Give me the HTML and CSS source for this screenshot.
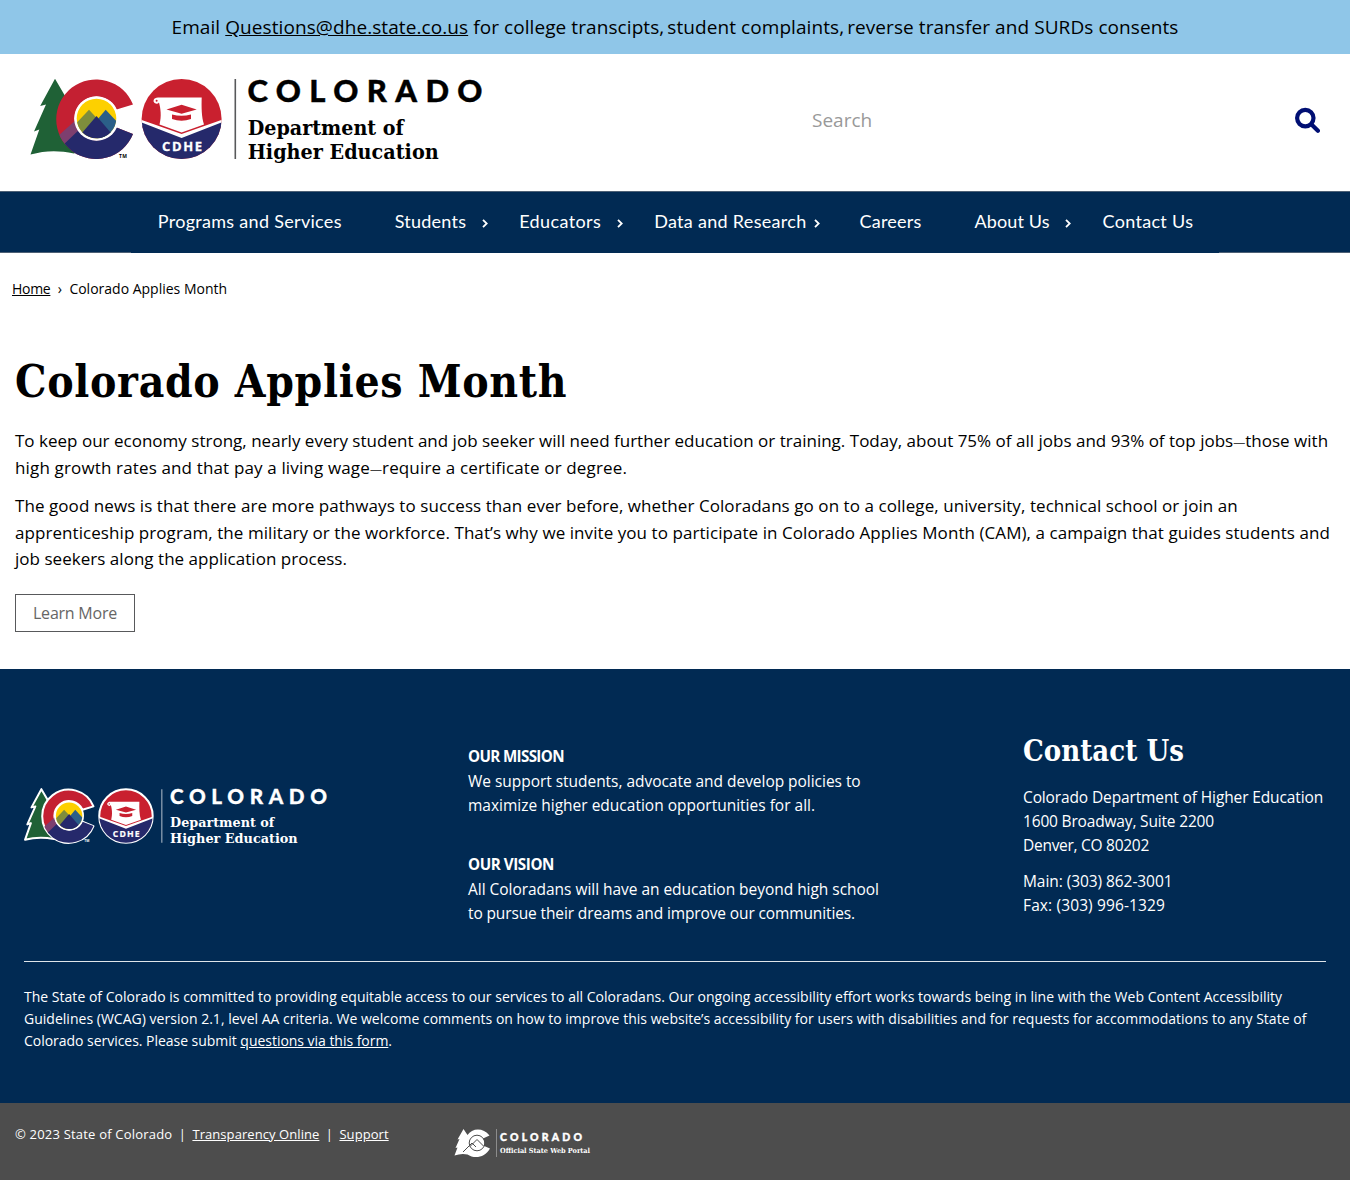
FILE: index.html
```html
<!DOCTYPE html>
<html lang="en">
<head>
<meta charset="utf-8">
<title>Colorado Applies Month</title>
<link rel="stylesheet" href="styles.css">
</head>
<body>
<svg class="sprite" aria-hidden="true">
  <defs>
    <clipPath id="c-clip"><path d="M113 39.500A39.800 39.800 0 1 0 113 69L96.500 62.500A22 22 0 1 1 96.500 44.500Z"/></clipPath>
    <clipPath id="sun-clip"><circle cx="76.500" cy="53.500" r="19.800"/></clipPath>
    <clipPath id="badge-clip"><circle cx="161.600" cy="54" r="40"/></clipPath>
    <symbol id="cdhe-logo" viewBox="0 0 470 110">
      <path class="edge" fill="#1f6136" d="M35 13.700 48 36 60 86 54 88.500C38 85 25 85.500 10.500 89.500L19.300 64.500 14 66.500 26 39.500 20.200 41Z"/>
      <path class="edge" fill="#c42032" d="M113 39.500A39.800 39.800 0 1 0 113 69L96.500 62.500A22 22 0 1 1 96.500 44.500Z"/>
      <g clip-path="url(#c-clip)">
        <path fill="#7d3f6f" d="M37 72 58 53 72 66 64 78 44 80Z"/>
        <path fill="#25296b" d="M40 83 62 62 80 60 96 58 116 62 116 100 50 100Z"/>
      </g>
      <circle cx="76.500" cy="53.500" r="22.300" fill="#fff"/>
      <g clip-path="url(#sun-clip)">
        <path fill="#fdd000" d="M50 30H100V80H50Z"/>
        <path fill="#7e8d3c" d="M50 65 69 44.700 86 63V80H50Z"/>
        <path fill="#2b5f88" d="M77 55 85.700 44.700 100 60V75H77Z"/>
        <path fill="#25296b" d="M50 82 76.500 51 103 82Z"/>
      </g>
      <text class="logo-sans logo-mark" x="99" y="92.500" font-size="5" textLength="8">TM</text>
      <circle class="edge" cx="161.600" cy="54" r="40" fill="#c9202f"/>
      <g clip-path="url(#badge-clip)">
        <path fill="#fff" d="M119 54 161.600 69 204 54V60L161.600 77 119 60Z"/>
        <path fill="#25296b" d="M119 56.500 161.600 73 204 56.500V100H119Z"/>
      </g>
      <path fill="#fff" d="M138 32.500H181.700C181.400 42 181.500 52 184 59.500L161.600 67.500 139.500 59.500C141.800 51 140.500 43 139 37.500Q137.500 39.500 135 38.300C132.300 36.500 133.500 32.500 138 32.500Z"/>
      <path fill="#c9202f" d="M146.500 44.500 161.600 39.700 176.700 44.500 161.600 48.800ZM152 49.500Q161.600 52 171 49.500V54Q161.600 57.500 152 54Z"/>
      <circle cx="136.600" cy="35.800" r="1" fill="#c9202f"/>
      <text class="logo-sans" x="142" y="85.800" font-size="13" fill="#fff" textLength="40" stroke="#fff" stroke-width=".3">CDHE</text>
      <path class="rule" d="M215.300 14V94"/>
      <text class="logo-geo" x="227.500" y="36.500" font-size="31" textLength="235">COLORADO</text>
      <text class="logo-slab" x="227.700" y="70" font-size="20.500" textLength="156" lengthAdjust="spacingAndGlyphs">Department of</text>
      <text class="logo-slab" x="227.700" y="93.600" font-size="20.500" textLength="191" lengthAdjust="spacingAndGlyphs">Higher Education</text>
    </symbol>
  </defs>
</svg>

<div class="banner">Email <a href="#">Questions@dhe.state.co.us</a> for college transcipts<span class="comma">,</span>student complaints<span class="comma">,</span>reverse transfer and SURDs consents</div>

<header class="header">
  <a class="brand" href="#" aria-label="Colorado Department of Higher Education"><svg class="brand-logo"><use href="#cdhe-logo"/></svg></a>
  <div class="search">
    <span>Search</span>
    <svg class="search-icon" viewBox="0 0 26 26"><circle cx="11.300" cy="11.100" r="8.200"/><path d="M17.300 17.200 23.900 23.700"/></svg>
  </div>
</header>

<nav class="nav">
  <ul class="menu">
    <li class="sp3">Programs and Services</li>
    <li class="sp2">Students<svg class="chev" viewBox="0 0 6 9"><path d="M1 .8 4.700 4.500 1 8.200"/></svg></li>
    <li class="sp4">Educators<svg class="chev" viewBox="0 0 6 9"><path d="M1 .8 4.700 4.500 1 8.200"/></svg></li>
    <li class="sp3 near">Data and Research<svg class="chev" viewBox="0 0 6 9"><path d="M1 .8 4.700 4.500 1 8.200"/></svg></li>
    <li class="sp2">Careers</li>
    <li class="sp1">About Us<svg class="chev" viewBox="0 0 6 9"><path d="M1 .8 4.700 4.500 1 8.200"/></svg></li>
    <li class="sp3">Contact Us</li>
  </ul>
</nav>

<div class="crumbs"><a href="#">Home</a><span class="sep">›</span><span>Colorado Applies Month</span></div>

<main class="main">
  <h1>Colorado Applies Month</h1>
  <p>
    <span class="line b1">To keep our economy strong, nearly every student and job seeker will need further education or training. Today, about 75% of all jobs and 93% of top jobs<span class="dash">—</span>those with</span>
    <span class="line b2">high growth rates and that pay a living wage<span class="dash">—</span>require a certificate or degree.</span>
  </p>
  <p>
    <span class="line b3">The good news is that there are more pathways to success than ever before, whether Coloradans go on to a college, university, technical school or join an</span>
    <span class="line b3">apprenticeship program, the military or the workforce. That’s why we invite you to participate in Colorado Applies Month (CAM), a campaign that guides students and</span>
    <span class="line b4">job seekers along the application process.</span>
  </p>
  <a class="button" href="#">Learn More</a>
</main>

<footer class="footer">
  <div class="footer-cols">
    <svg class="footer-logo"><use href="#cdhe-logo"/></svg>
    <div class="statements">
      <section>
        <h2>OUR MISSION</h2>
        <span class="line f0">We support students, advocate and develop policies to</span>
        <span class="line">maximize higher education opportunities for all.</span>
      </section>
      <section>
        <h2 class="vision">OUR VISION</h2>
        <span class="line f0">All Coloradans will have an education beyond high school</span>
        <span class="line f1">to pursue their dreams and improve our communities.</span>
      </section>
    </div>
    <div class="contact">
      <h3>Contact Us</h3>
      <address>
        <span class="line f1">Colorado Department of Higher Education</span>
        <span class="line f2">1600 Broadway, Suite 2200</span>
        <span class="line f3">Denver, CO 80202</span>
      </address>
      <div>
        <span class="line f4">Main: (303) 862-3001</span>
        <span class="line f5">Fax: (303) 996-1329</span>
      </div>
    </div>
  </div>
  <div class="access">
    <span class="line a1">The State of Colorado is committed to providing equitable access to our services to all Coloradans. Our ongoing accessibility effort works towards being in line with the Web Content Accessibility</span>
    <span class="line a1">Guidelines (WCAG) version 2.1, level AA criteria. We welcome comments on how to improve this website’s accessibility for users with disabilities and for requests for accommodations to any State of</span>
    <span class="line a2">Colorado services. Please submit <a href="#">questions via this form</a>.</span>
  </div>
</footer>

<div class="legal">
  <div class="legal-links"><span>© 2023 State of Colorado</span><i>|</i><a href="#">Transparency Online</a><i>|</i><a href="#">Support</a></div>
  <svg class="portal" viewBox="0 0 140 34">
    <path fill="#fff" d="M9.500 3 13.500 9C18 2 29 1 35.500 9.500L29 12.500V19.500L36 22.500C31 32 20 33 13.500 28.500Q7.500 27 .5 29.500L3.500 21.500 1.500 22 5.500 13 3.500 13.500Z"/>
    <circle cx="23" cy="17" r="7.500" fill="#fff"/>
    <path class="portal-line" d="M9 26 18 17 22 21M16 20.500 23 13.500 29.500 20"/>
    <circle class="portal-line" cx="23" cy="17" r="7.800"/>
    <path d="M42.500 3V31" stroke="#8c8c8c"/>
    <text class="logo-geo" x="46" y="14.900" font-size="10.500" textLength="82">COLORADO</text>
    <text class="logo-slab" x="46" y="27" font-size="7" textLength="90" lengthAdjust="spacingAndGlyphs">Official State Web Portal</text>
  </svg>
</div>
</body>
</html>
```
FILE: styles.css
```css
* { box-sizing: border-box; }
body {
  margin: 0;
  background: #fff;
  color: #000;
  font-family: "Open Sans", sans-serif;
}
a { color: inherit; text-underline-offset: 1px; }
h1, h2, h3, p, ul { margin: 0; padding: 0; }
.line { display: block; white-space: nowrap; }
.sprite { display: block; width: 0; height: 0; }

/* Logo artwork */
.edge { stroke: var(--edge, none); stroke-width: 3px; stroke-linejoin: round; }
.rule { stroke: var(--rule, #58595b); stroke-width: 1.6px; }
.logo-sans { font-family: "Open Sans", sans-serif; font-weight: 700; }
.logo-mark { fill: currentColor; }
.logo-geo {
  font-family: Lato, sans-serif;
  font-weight: 900;
  fill: currentColor;
  stroke: currentColor;
  stroke-width: .4px;
}
.logo-slab { font-family: "DejaVu Serif", serif; font-stretch: condensed; font-weight: 700; fill: currentColor; }

.banner {
  height: 54px;
  background: #8fc6e8;
  font-size: 19px;
  line-height: 54px;
  letter-spacing: .08px;
  text-align: center;
  white-space: nowrap;
}
.comma { letter-spacing: 3px; }

.header {
  display: flex;
  align-items: flex-start;
  height: 137px;
  padding: 11px 30px 0 20px;
}
.brand-logo { display: block; width: 470px; height: 110px; }
.search {
  display: flex;
  flex: 1;
  align-items: center;
  justify-content: space-between;
  height: 110px;
  margin-left: 322px;
  color: #999;
  font-size: 19px;
}
.search-icon {
  width: 26px;
  height: 26px;
  fill: none;
  stroke: #000f73;
  stroke-width: 4.2px;
  stroke-linecap: round;
}

.nav {
  display: flex;
  justify-content: center;
  height: 62px;
  background: #012a53;
  border: solid #4d6075;
  border-width: 1px 0;
}
.menu {
  display: flex;
  gap: 53px;
  height: 61px;
  padding: 0 26px 0 27px;
  background: #012a53;
  color: #fff;
  font: 18px/59px Lato, sans-serif;
  list-style: none;
}
.menu li { position: relative; white-space: nowrap; }
.sp1 { letter-spacing: .11px; }
.sp2 { letter-spacing: .23px; }
.sp3 { letter-spacing: .3px; }
.sp4 { letter-spacing: .39px; }
.chev {
  position: absolute;
  top: 27px;
  right: -21.5px;
  width: 6px;
  height: 9px;
  fill: none;
  stroke: currentColor;
  stroke-width: 1.8px;
}
.near .chev { right: -13.5px; }

.crumbs {
  display: flex;
  padding: 26px 12px 0;
  font-size: 14px;
  line-height: 20px;
}
.crumbs a { letter-spacing: -.3px; }
.sep { width: 19px; text-align: center; }

.main { height: 370px; padding: 52px 15px 0; }
h1 {
  margin-bottom: 15px;
  font: 700 44px/62px "DejaVu Serif", serif;
  font-stretch: condensed;
  letter-spacing: .68px;
}
.main p {
  margin-bottom: 12px;
  font-size: 17px;
  line-height: 26.5px;
}
.dash { font-size: 12px; line-height: 1; color: #444; }
.b1 { letter-spacing: .01px; }
.b2 { letter-spacing: .148px; }
.b3 { letter-spacing: .066px; }
.b4 { letter-spacing: .03px; }
.button {
  display: block;
  width: 120px;
  height: 38px;
  margin-top: 21.5px;
  border: 1px solid #58595b;
  color: #666;
  font-size: 16px;
  line-height: 36px;
  letter-spacing: -.23px;
  text-align: center;
  text-decoration: none;
}

.footer {
  height: 434px;
  padding: 0 24px;
  background: #012a53;
  color: #fff;
}
.footer-cols {
  display: grid;
  grid-template-columns: 444px 555px 1fr;
  height: 293px;
  border-bottom: 1px solid #dfe5ea;
  font-size: 15.5px;
  line-height: 24px;
}
.footer-logo {
  --edge: #fff;
  --rule: #a9b6c4;
  width: 314px;
  height: 73.5px;
  margin: 111px 0 0 -6px;
}
.statements {
  display: flex;
  flex-direction: column;
  gap: 36px;
  padding-top: 76px;
}
h2 { font-size: 15.2px; line-height: 23px; letter-spacing: -.66px; padding-bottom: 1px; }
.vision { letter-spacing: -.43px; }
.contact { padding-top: 60px; }
h3 {
  margin-bottom: 12px;
  font: 700 29px/44px "DejaVu Serif", serif;
  font-stretch: condensed;
  letter-spacing: .04px;
}
address { margin-bottom: 12px; font-style: normal; }
.f0 { letter-spacing: -.036px; }
.f1 { letter-spacing: -.126px; }
.f2 { letter-spacing: -.172px; }
.f3 { letter-spacing: -.277px; }
.f4 { letter-spacing: -.068px; }
.f5 { letter-spacing: .126px; }
.access { padding-top: 24px; font-size: 14px; line-height: 22px; }
.a1 { letter-spacing: .019px; }
.a2 { letter-spacing: -.031px; }

.legal {
  display: flex;
  height: 77px;
  padding: 21px 15px 0;
  background: #4d4d4d;
  color: #fff;
  font-size: 13px;
  line-height: 20px;
}
.legal-links { display: flex; width: 439px; letter-spacing: .07px; }
.legal-links span { letter-spacing: .2px; }
.legal-links i { width: 20px; font-style: normal; text-align: center; }
.portal { width: 140px; height: 34px; margin-top: 2px; }
.portal-line { fill: none; stroke: #4d4d4d; stroke-width: 1px; }
```
